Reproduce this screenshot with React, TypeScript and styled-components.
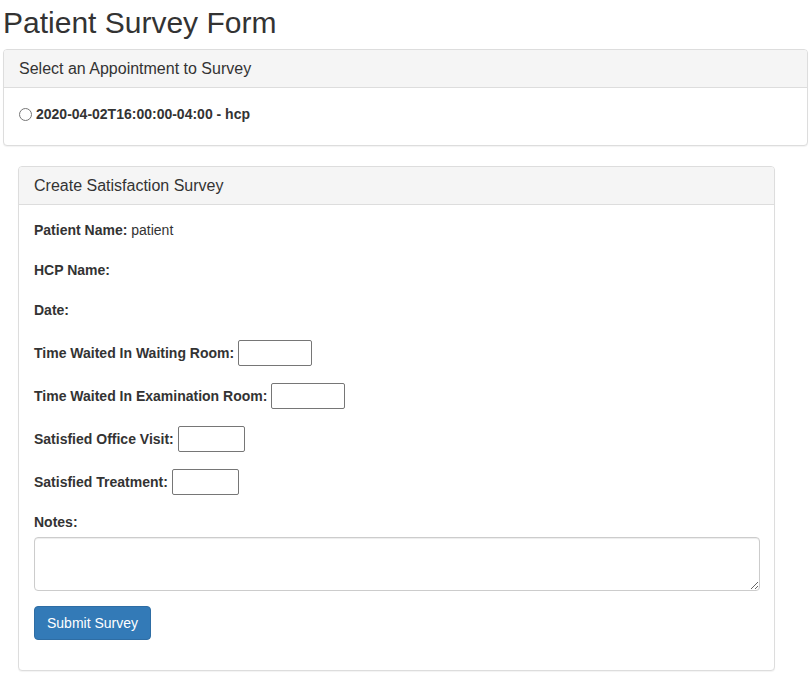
import React from 'react';
import styled, { createGlobalStyle } from 'styled-components';

const GlobalStyle = createGlobalStyle`
  body {
    margin: 0;
    background: #fff;
    color: #333;
    font-family: "Liberation Sans", Arial, Helvetica, sans-serif;
    font-size: 14px;
    line-height: 1.42857;
  }
  * { box-sizing: border-box; }
`;

const Page = styled.div`
  padding: 0 1px 0 3px;
`;

const Title = styled.h1`
  font-size: 30px;
  font-weight: 400;
  line-height: 33px;
  margin: 6px 0 10px 0;
`;

const Panel = styled.section<{ $inset?: boolean }>`
  border: 1px solid #ddd;
  border-radius: 4px;
  background: #fff;
  box-shadow: 0 1px 1px rgba(0, 0, 0, 0.05);
  margin: ${(p) => (p.$inset ? '0 0 18px 15px' : '0 0 20px 0')};
  width: ${(p) => (p.$inset ? '757px' : 'auto')};
`;

const PanelHeading = styled.div`
  background: #f5f5f5;
  border-bottom: 1px solid #ddd;
  border-radius: 3px 3px 0 0;
  padding: 10px 15px 9px;
  font-size: 16px;
  line-height: 18px;
  color: #333;
`;

const PanelBody = styled.div`
  padding: 15px;
`;

const RadioRow = styled.label`
  display: flex;
  align-items: center;
  height: 27px;
  padding: 2px 0 5px;
  font-weight: 700;
`;

const Radio = styled.input`
  width: 13px;
  height: 13px;
  margin: -2px 4px 0 0;
`;

const Field = styled.div`
  display: flex;
  align-items: flex-start;
  gap: 4px;
  margin-bottom: 15px;
`;

const TextField = styled(Field)`
  height: 25px;
`;

const InputField = styled(Field)`
  height: 28px;
`;

const Label = styled.label<{ $tall?: boolean }>`
  font-weight: 700;
  line-height: ${(p) => (p.$tall ? '27px' : '21px')};
`;

const Value = styled.span`
  font-weight: 400;
`;

const SmallInput = styled.input<{ $w: number }>`
  width: ${(p) => p.$w}px;
  height: 26px;
  border: 1px solid #767676;
  border-radius: 2px;
  padding: 1px 2px;
  font: inherit;
`;

const NotesLabel = styled(Label)`
  display: block;
  margin-bottom: 4px;
`;

const Notes = styled.textarea`
  display: block;
  width: calc(100% + 1px);
  height: 54px;
  border: 1px solid #ccc;
  border-radius: 4px;
  box-shadow: inset 0 1px 1px rgba(0, 0, 0, 0.075);
  margin-bottom: 15px;
  font: inherit;
`;

const SubmitButton = styled.button`
  display: block;
  height: 34px;
  padding: 6px 12px;
  font-family: inherit;
  font-size: 14px;
  line-height: 20px;
  color: #fff;
  background: #337ab7;
  border: 1px solid #2e6da4;
  border-radius: 4px;
  margin-bottom: 15px;
  cursor: pointer;
`;

const inputs = [
  { label: 'Time Waited In Waiting Room:', w: 74 },
  { label: 'Time Waited In Examination Room:', w: 74 },
  { label: 'Satisfied Office Visit:', w: 67 },
  { label: 'Satisfied Treatment:', w: 67 },
];

export default function App() {
  return (
    <Page>
      <GlobalStyle />
      <Title>Patient Survey Form</Title>

      <Panel>
        <PanelHeading>Select an Appointment to Survey</PanelHeading>
        <PanelBody>
          <RadioRow>
            <Radio type="radio" name="appt" />
            2020-04-02T16:00:00-04:00 - hcp
          </RadioRow>
        </PanelBody>
      </Panel>

      <Panel $inset>
        <PanelHeading>Create Satisfaction Survey</PanelHeading>
        <PanelBody>
          <TextField>
            <Label>
              Patient Name: <Value>patient</Value>
            </Label>
          </TextField>
          <TextField>
            <Label>HCP Name:</Label>
          </TextField>
          <TextField>
            <Label>Date:</Label>
          </TextField>
          {inputs.map((f) => (
            <InputField key={f.label}>
              <Label $tall>{f.label}</Label>
              <SmallInput type="text" $w={f.w} />
            </InputField>
          ))}
          <NotesLabel>Notes:</NotesLabel>
          <Notes />
          <SubmitButton type="button">Submit Survey</SubmitButton>
        </PanelBody>
      </Panel>
    </Page>
  );
}
